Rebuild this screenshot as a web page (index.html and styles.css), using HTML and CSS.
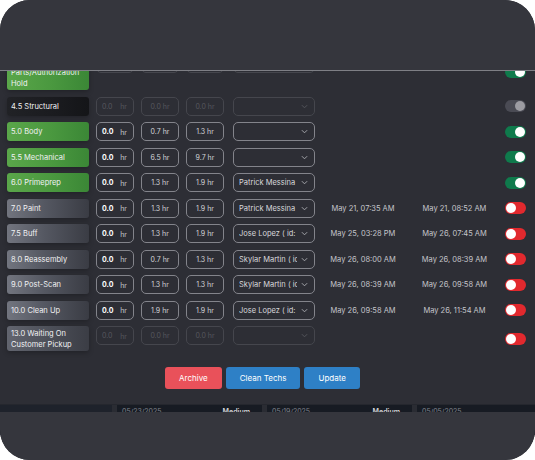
FILE: index.html
```html
<!DOCTYPE html>
<html>
<head>
<meta charset="utf-8">
<link rel="stylesheet" href="styles.css">
</head>
<body>
<div class="frame">
  <div class="content">
    <div class="rows">
      <div class="row">
        <div class="label green">4.0 Waiting On Parts/Authorization Hold</div>
        <div class="field first off"><b>0.0</b><span>hr</span></div>
        <div class="field off">0.0 hr</div>
        <div class="field off">0.0 hr</div>
        <div class="select off"><span class="sel-text"></span><svg class="chev" viewBox="0 0 8 5"><polyline points="1,1 4,4 7,1"/></svg></div>
        <div class="toggle on"><i></i></div>
      </div>
      <div class="row">
        <div class="label black">4.5 Structural</div>
        <div class="field first off"><b>0.0</b><span>hr</span></div>
        <div class="field off">0.0 hr</div>
        <div class="field off">0.0 hr</div>
        <div class="select off"><span class="sel-text"></span><svg class="chev" viewBox="0 0 8 5"><polyline points="1,1 4,4 7,1"/></svg></div>
        <div class="toggle dis"><i></i></div>
      </div>
      <div class="row">
        <div class="label green">5.0 Body</div>
        <div class="field first"><b>0.0</b><span>hr</span></div>
        <div class="field">0.7 hr</div>
        <div class="field">1.3 hr</div>
        <div class="select"><span class="sel-text"></span><svg class="chev" viewBox="0 0 8 5"><polyline points="1,1 4,4 7,1"/></svg></div>
        <div class="toggle on"><i></i></div>
      </div>
      <div class="row">
        <div class="label green">5.5 Mechanical</div>
        <div class="field first"><b>0.0</b><span>hr</span></div>
        <div class="field">6.5 hr</div>
        <div class="field">9.7 hr</div>
        <div class="select"><span class="sel-text"></span><svg class="chev" viewBox="0 0 8 5"><polyline points="1,1 4,4 7,1"/></svg></div>
        <div class="toggle on"><i></i></div>
      </div>
      <div class="row">
        <div class="label green">6.0 Primeprep</div>
        <div class="field first"><b>0.0</b><span>hr</span></div>
        <div class="field">1.3 hr</div>
        <div class="field">1.9 hr</div>
        <div class="select"><span class="sel-text">Patrick Messina</span><svg class="chev" viewBox="0 0 8 5"><polyline points="1,1 4,4 7,1"/></svg></div>
        <div class="toggle on"><i></i></div>
      </div>
      <div class="row">
        <div class="label gray">7.0 Paint</div>
        <div class="field first"><b>0.0</b><span>hr</span></div>
        <div class="field">1.3 hr</div>
        <div class="field">1.9 hr</div>
        <div class="select"><span class="sel-text">Patrick Messina</span><svg class="chev" viewBox="0 0 8 5"><polyline points="1,1 4,4 7,1"/></svg></div>
        <div class="date">May 21, 07:35 AM</div>
        <div class="date">May 21, 08:52 AM</div>
        <div class="toggle red"><i></i></div>
      </div>
      <div class="row">
        <div class="label gray">7.5 Buff</div>
        <div class="field first"><b>0.0</b><span>hr</span></div>
        <div class="field">1.3 hr</div>
        <div class="field">1.9 hr</div>
        <div class="select"><span class="sel-text">Jose Lopez ( id: 5 )</span><svg class="chev" viewBox="0 0 8 5"><polyline points="1,1 4,4 7,1"/></svg></div>
        <div class="date">May 25, 03:28 PM</div>
        <div class="date">May 26, 07:45 AM</div>
        <div class="toggle red"><i></i></div>
      </div>
      <div class="row">
        <div class="label gray">8.0 Reassembly</div>
        <div class="field first"><b>0.0</b><span>hr</span></div>
        <div class="field">0.7 hr</div>
        <div class="field">1.3 hr</div>
        <div class="select"><span class="sel-text">Skylar Martin ( id: 7 )</span><svg class="chev" viewBox="0 0 8 5"><polyline points="1,1 4,4 7,1"/></svg></div>
        <div class="date">May 26, 08:00 AM</div>
        <div class="date">May 26, 08:39 AM</div>
        <div class="toggle red"><i></i></div>
      </div>
      <div class="row">
        <div class="label gray">9.0 Post-Scan</div>
        <div class="field first"><b>0.0</b><span>hr</span></div>
        <div class="field">1.3 hr</div>
        <div class="field">1.3 hr</div>
        <div class="select"><span class="sel-text">Skylar Martin ( id: 7 )</span><svg class="chev" viewBox="0 0 8 5"><polyline points="1,1 4,4 7,1"/></svg></div>
        <div class="date">May 26, 08:39 AM</div>
        <div class="date">May 26, 09:58 AM</div>
        <div class="toggle red"><i></i></div>
      </div>
      <div class="row">
        <div class="label gray">10.0 Clean Up</div>
        <div class="field first"><b>0.0</b><span>hr</span></div>
        <div class="field">1.9 hr</div>
        <div class="field">1.9 hr</div>
        <div class="select"><span class="sel-text">Jose Lopez ( id: 5 )</span><svg class="chev" viewBox="0 0 8 5"><polyline points="1,1 4,4 7,1"/></svg></div>
        <div class="date">May 26, 09:58 AM</div>
        <div class="date">May 26, 11:54 AM</div>
        <div class="toggle red"><i></i></div>
      </div>
      <div class="row">
        <div class="label gray2">13.0 Waiting On Customer Pickup</div>
        <div class="field first off"><b>0.0</b><span>hr</span></div>
        <div class="field off">0.0 hr</div>
        <div class="field off">0.0 hr</div>
        <div class="select off"><span class="sel-text"></span><svg class="chev" viewBox="0 0 8 5"><polyline points="1,1 4,4 7,1"/></svg></div>
        <div class="toggle red"><i></i></div>
      </div>
    </div>

    <div class="actions">
      <button class="btn btn-red">Archive</button>
      <button class="btn btn-blue">Clean Techs</button>
      <button class="btn btn-blue">Update</button>
    </div>

    <div class="strip">
      <div class="card card-first"></div>
      <div class="card"><span class="c-date">05/23/2025</span><span class="c-prio">Medium</span></div>
      <div class="card"><span class="c-date">05/19/2025</span><span class="c-prio">Medium</span></div>
      <div class="card card-last"><span class="c-date">05/05/2025</span></div>
    </div>
  </div>
  <div class="top-cover"></div>
  <div class="bottom-cover"></div>
</div>
</body>
</html>
```

FILE: styles.css
```css
html, body {
  margin: 0;
  padding: 0;
  background: #ffffff;
}

body {
  font-family: Inter, "Open Sans", "DejaVu Sans", sans-serif;
}

.frame {
  position: relative;
  width: 535px;
  height: 460px;
  border-radius: 30px;
  overflow: hidden;
  background: #2d2e35;
}

.content {
  padding-top: 54px;
  display: flex;
  flex-direction: column;
}

.rows {
  display: flex;
  flex-direction: column;
  gap: 6.5px;
  padding-left: 7px;
}

.row {
  display: grid;
  grid-template-columns: 82px 38px 38px 38px 84px 82px 87px 21px;
  column-gap: 7px;
  align-items: start;
}

.label {
  box-sizing: border-box;
  min-height: 19px;
  padding: 1.5px 4px;
  display: flex;
  align-items: center;
  border-radius: 3px;
  font-size: 7.5px;
  line-height: 11px;
  color: #f1f1f3;
  box-shadow: 0 2px 5px rgba(0, 0, 0, 0.25);
}

.label.green {
  background: linear-gradient(90deg, #5aa64a 0%, #4a983f 55%, #3b8736 100%);
}

.label.black {
  background: linear-gradient(90deg, #212226 0%, #1a1b1f 60%, #141518 100%);
}

.label.gray {
  background: linear-gradient(90deg, #72757f 0%, #555862 45%, #3a3c44 100%);
}

.label.gray2 {
  background: linear-gradient(90deg, #62656f 0%, #4d5059 50%, #3b3d45 100%);
}

.field {
  box-sizing: border-box;
  height: 19px;
  border: 1px solid #83848b;
  border-radius: 5px;
  display: flex;
  align-items: center;
  justify-content: center;
  font-size: 7px;
  color: #d4d4d8;
}

.field.first {
  justify-content: space-between;
  padding: 0 6px 0 5px;
}

.field.first b {
  color: #ffffff;
  font-weight: 700;
}

.field.first span {
  color: #c9c9cd;
  padding-top: 1px;
}

.field.off {
  border-color: #45464d;
  color: #56575e;
}

.field.off b,
.field.off span {
  color: #56575e;
  font-weight: 400;
}

.select {
  box-sizing: border-box;
  margin-left: 2px;
  width: 82px;
  height: 19px;
  border: 1px solid #83848b;
  border-radius: 5px;
  display: flex;
  align-items: center;
  padding: 0 6px 0 5px;
  gap: 4px;
  font-size: 7.5px;
  color: #d8d8dc;
}

.select.off {
  border-color: #45464d;
}

.sel-text {
  flex: 1;
  white-space: nowrap;
  overflow: hidden;
}

.chev {
  width: 7px;
  height: 5px;
  fill: none;
  stroke: #a8a9ae;
  stroke-width: 1.1;
  flex: none;
}

.select.off .chev {
  stroke: #55565d;
}

.date {
  align-self: center;
  text-align: center;
  font-size: 7.5px;
  color: #c4c5ca;
  white-space: nowrap;
}

.toggle {
  grid-column: 8;
  align-self: center;
  box-sizing: border-box;
  width: 21px;
  height: 12px;
  border-radius: 6px;
  padding: 1px;
  display: flex;
  align-items: center;
}

.toggle i {
  display: block;
  width: 10px;
  height: 10px;
  border-radius: 50%;
  background: #ffffff;
}

.toggle.on {
  background: #0f7a4c;
  justify-content: flex-end;
}

.toggle.dis {
  background: #4a4b54;
  justify-content: flex-end;
}

.toggle.dis i {
  background: #9c9ca2;
}

.toggle.red {
  background: #e2292e;
  justify-content: flex-start;
}

.actions {
  margin-top: 16px;
  display: flex;
  justify-content: center;
  gap: 4px;
  padding-right: 10px;
}

.btn {
  height: 22px;
  border: none;
  border-radius: 3px;
  padding: 0 14px;
  font-family: inherit;
  font-size: 8px;
  color: #ffffff;
}

.btn-red {
  background: #e9515a;
}

.btn-blue {
  background: #2e80c6;
}

.strip {
  margin-top: 15px;
  height: 30px;
  display: flex;
  gap: 5px;
  background: #2a2c33;
  border-top: 1px solid #25272e;
}

.card {
  flex: none;
  width: 145px;
  background: #171b23;
  display: flex;
  justify-content: space-between;
  padding: 2px 12px 0 5px;
  box-sizing: border-box;
  font-size: 7px;
  line-height: 9px;
}

.card-first {
  width: 112px;
  background: #1e222b;
}

.card-last {
  flex: 1;
}

.c-date {
  color: #7f838c;
}

.c-prio {
  color: #d4d5d8;
  font-weight: 600;
}

.top-cover {
  position: absolute;
  top: 0;
  left: 0;
  right: 0;
  height: 70px;
  background: #35363d;
  border-bottom: 1px solid #7e7f85;
}

.bottom-cover {
  position: absolute;
  bottom: 0;
  left: 0;
  right: 0;
  height: 48px;
  background: #35363d;
}
```
